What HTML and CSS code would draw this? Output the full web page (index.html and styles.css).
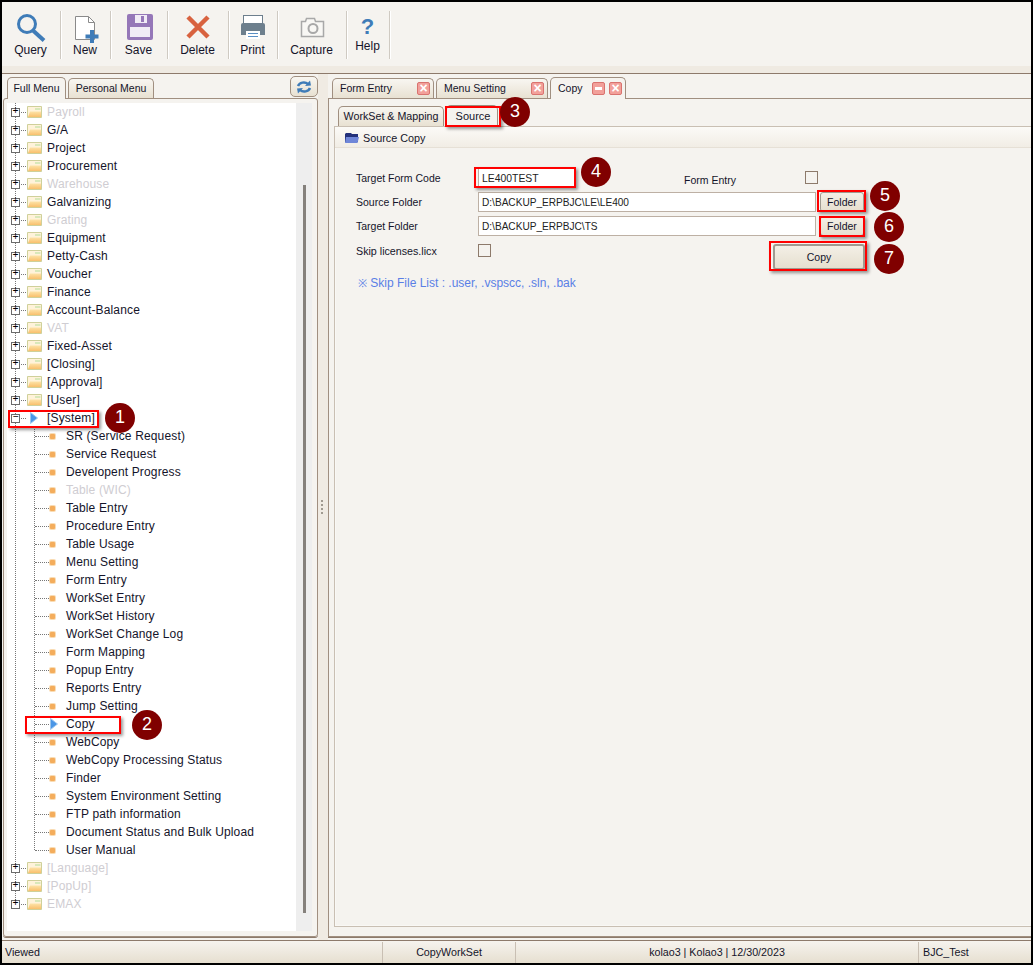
FILE: index.html
```html
<!DOCTYPE html>
<html>
<head>
    <meta charset="UTF-8">
    <title>Copy</title>
    <link rel="stylesheet" href="styles.css">
</head>
<body>

<svg class="defs" width="0" height="0">
    <defs>
        <linearGradient id="folderFill" x1="0" y1="0" x2="0" y2="1">
            <stop offset="0" stop-color="#fde3a8"/>
            <stop offset="1" stop-color="#f9bf6c"/>
        </linearGradient>
    </defs>
    <symbol id="folder" viewBox="0 0 15 12">
        <path d="M.5 .5h14v11H.5z" fill="#fff3da" stroke="#cfd09a"/>
        <path d="M8 2h5.500v2H8z" fill="#d8e8ba"/>
        <path d="M1 11l2-5.500h11V11z" fill="url(#folderFill)"/>
    </symbol>
    <symbol id="arrow" viewBox="0 0 8 12">
        <path d="M.5 .5L7.500 6 .5 11.500z" fill="#4a96e6" stroke="#9cc6ee"/>
    </symbol>
</svg>

<div id="app">
    <div class="toolbar">
        <div class="tool tool-query">
            <svg width="32" height="31" viewBox="0 0 32 31"><circle cx="12" cy="12" r="8.500" fill="none" stroke="#3f7cb8" stroke-width="3"/><path d="M18 18.500L29 28.500" stroke="#3f7cb8" stroke-width="4"/></svg>
            <span>Query</span>
        </div>
        <div class="tool tool-new">
            <svg width="32" height="31" viewBox="0 0 32 31"><path d="M6.500 4.500h13l6 6v17h-19z" fill="#fff" stroke="#8a8a8a"/><path d="M19.500 4.500v6h6" fill="none" stroke="#8a8a8a"/><path d="M23 18v13M16.500 24.500h13" stroke="#3f7cb8" stroke-width="4"/></svg>
            <span>New</span>
        </div>
        <div class="tool tool-save">
            <svg width="32" height="31" viewBox="0 0 32 31"><rect x="4" y="2" width="26" height="26" rx="2" fill="#9577b8"/><rect x="12" y="3" width="12" height="8" fill="#f1ecf6"/><rect x="18" y="4" width="3" height="6" fill="#9577b8"/><rect x="7" y="15" width="20" height="10" fill="#f1ecf6"/></svg>
            <span>Save</span>
        </div>
        <div class="tool tool-delete">
            <svg width="32" height="31" viewBox="0 0 32 31"><path d="M6 5l20 20M26 5L6 25" stroke="#d8623f" stroke-width="4.500"/></svg>
            <span>Delete</span>
        </div>
        <div class="tool tool-print">
            <svg width="32" height="31" viewBox="0 0 32 31"><rect x="6.500" y="3.500" width="19" height="9" fill="#fff" stroke="#6d7f8d"/><path d="M4 13a2 2 0 0 1 2-2h20a2 2 0 0 1 2 2v10H4z" fill="#6d7f8d"/><rect x="9" y="19" width="14" height="8" fill="#fff"/><path d="M11 21.500h10M11 24.500h10" stroke="#5a8fc4"/></svg>
            <span>Print</span>
        </div>
        <div class="tool tool-capture">
            <svg width="32" height="31" viewBox="0 0 32 31"><path d="M5.500 9.500h4l1-3h8l1 3h8v15h-22z" fill="#f8f7f4" stroke="#a8a8a8" stroke-width="1.500"/><circle cx="17" cy="16.500" r="4.500" fill="none" stroke="#a8a8a8" stroke-width="2"/></svg>
            <span>Capture</span>
        </div>
        <div class="tool tool-help">
            <span class="help-mark">?</span>
            <span>Help</span>
        </div>
    </div>
    <div class="toolbar-band"></div>

    <div class="main">
        <div class="left">
            <div class="left-tabs">
                <div class="tab tab-on tab-full">Full Menu</div>
                <div class="tab tab-personal">Personal Menu</div>
                <div class="refresh">
                    <svg width="18" height="14" viewBox="0 0 18 14"><path d="M3 6a6 5 0 0 1 10-2" fill="none" stroke="#3f7cb8" stroke-width="2.500"/><path d="M10 6l6-.5-1-5z" fill="#3f7cb8"/><path d="M15 8a6 5 0 0 1-10 2" fill="none" stroke="#3f7cb8" stroke-width="2.500"/><path d="M8 8l-6 .5 1 5z" fill="#3f7cb8"/></svg>
                </div>
            </div>
            <div class="menu-pane">
                <div class="tree-wrap">
                    <div class="tree">
                        <div class="row off"><i class="box">+</i><i class="stub"></i><svg class="folder"><use href="#folder"/></svg>Payroll</div>
                        <div class="row"><i class="box">+</i><i class="stub"></i><svg class="folder"><use href="#folder"/></svg>G/A</div>
                        <div class="row"><i class="box">+</i><i class="stub"></i><svg class="folder"><use href="#folder"/></svg>Project</div>
                        <div class="row"><i class="box">+</i><i class="stub"></i><svg class="folder"><use href="#folder"/></svg>Procurement</div>
                        <div class="row off"><i class="box">+</i><i class="stub"></i><svg class="folder"><use href="#folder"/></svg>Warehouse</div>
                        <div class="row"><i class="box">+</i><i class="stub"></i><svg class="folder"><use href="#folder"/></svg>Galvanizing</div>
                        <div class="row off"><i class="box">+</i><i class="stub"></i><svg class="folder"><use href="#folder"/></svg>Grating</div>
                        <div class="row"><i class="box">+</i><i class="stub"></i><svg class="folder"><use href="#folder"/></svg>Equipment</div>
                        <div class="row"><i class="box">+</i><i class="stub"></i><svg class="folder"><use href="#folder"/></svg>Petty-Cash</div>
                        <div class="row"><i class="box">+</i><i class="stub"></i><svg class="folder"><use href="#folder"/></svg>Voucher</div>
                        <div class="row"><i class="box">+</i><i class="stub"></i><svg class="folder"><use href="#folder"/></svg>Finance</div>
                        <div class="row"><i class="box">+</i><i class="stub"></i><svg class="folder"><use href="#folder"/></svg>Account-Balance</div>
                        <div class="row off"><i class="box">+</i><i class="stub"></i><svg class="folder"><use href="#folder"/></svg>VAT</div>
                        <div class="row"><i class="box">+</i><i class="stub"></i><svg class="folder"><use href="#folder"/></svg>Fixed-Asset</div>
                        <div class="row"><i class="box">+</i><i class="stub"></i><svg class="folder"><use href="#folder"/></svg>[Closing]</div>
                        <div class="row"><i class="box">+</i><i class="stub"></i><svg class="folder"><use href="#folder"/></svg>[Approval]</div>
                        <div class="row"><i class="box">+</i><i class="stub"></i><svg class="folder"><use href="#folder"/></svg>[User]</div>
                        <div class="row"><i class="box">&minus;</i><i class="stub"></i><svg class="open-arrow"><use href="#arrow"/></svg>[System]</div>
                        <div class="branch">
                            <div class="leaf"><i class="stub-long"></i><i class="dot"></i>SR (Service Request)</div>
                            <div class="leaf"><i class="stub-long"></i><i class="dot"></i>Service Request</div>
                            <div class="leaf"><i class="stub-long"></i><i class="dot"></i>Developent Progress</div>
                            <div class="leaf off"><i class="stub-long"></i><i class="dot"></i>Table (WIC)</div>
                            <div class="leaf"><i class="stub-long"></i><i class="dot"></i>Table Entry</div>
                            <div class="leaf"><i class="stub-long"></i><i class="dot"></i>Procedure Entry</div>
                            <div class="leaf"><i class="stub-long"></i><i class="dot"></i>Table Usage</div>
                            <div class="leaf"><i class="stub-long"></i><i class="dot"></i>Menu Setting</div>
                            <div class="leaf"><i class="stub-long"></i><i class="dot"></i>Form Entry</div>
                            <div class="leaf"><i class="stub-long"></i><i class="dot"></i>WorkSet Entry</div>
                            <div class="leaf"><i class="stub-long"></i><i class="dot"></i>WorkSet History</div>
                            <div class="leaf"><i class="stub-long"></i><i class="dot"></i>WorkSet Change Log</div>
                            <div class="leaf"><i class="stub-long"></i><i class="dot"></i>Form Mapping</div>
                            <div class="leaf"><i class="stub-long"></i><i class="dot"></i>Popup Entry</div>
                            <div class="leaf"><i class="stub-long"></i><i class="dot"></i>Reports Entry</div>
                            <div class="leaf"><i class="stub-long"></i><i class="dot"></i>Jump Setting</div>
                            <div class="leaf"><i class="stub-long"></i><svg class="leaf-arrow"><use href="#arrow"/></svg>Copy</div>
                            <div class="leaf"><i class="stub-long"></i><i class="dot"></i>WebCopy</div>
                            <div class="leaf"><i class="stub-long"></i><i class="dot"></i>WebCopy Processing Status</div>
                            <div class="leaf"><i class="stub-long"></i><i class="dot"></i>Finder</div>
                            <div class="leaf"><i class="stub-long"></i><i class="dot"></i>System Environment Setting</div>
                            <div class="leaf"><i class="stub-long"></i><i class="dot"></i>FTP path information</div>
                            <div class="leaf"><i class="stub-long"></i><i class="dot"></i>Document Status and Bulk Upload</div>
                            <div class="leaf"><i class="stub-long"></i><i class="dot"></i>User Manual</div>
                        </div>
                        <div class="row off"><i class="box">+</i><i class="stub"></i><svg class="folder"><use href="#folder"/></svg>[Language]</div>
                        <div class="row off"><i class="box">+</i><i class="stub"></i><svg class="folder"><use href="#folder"/></svg>[PopUp]</div>
                        <div class="row off"><i class="box">+</i><i class="stub"></i><svg class="folder"><use href="#folder"/></svg>EMAX</div>
                    </div>
                </div>
                <div class="scrollbar"><div class="thumb"></div></div>
            </div>
        </div>

        <div class="splitter"><i></i></div>

        <div class="right">
            <div class="page-tabs">
                <div class="tab page-tab tab-form">Form Entry<b class="close"></b></div>
                <div class="tab page-tab tab-setting">Menu Setting<b class="close"></b></div>
                <div class="tab tab-on page-tab tab-copy">Copy<b class="pin"></b><b class="close"></b></div>
            </div>
            <div class="page">
                <div class="sub-tabs">
                    <div class="tab sub-tab tab-workset">WorkSet &amp; Mapping</div>
                    <div class="tab tab-on sub-tab tab-source">Source</div>
                </div>
                <div class="panel">
                    <div class="panel-head">
                        <svg width="16" height="12" viewBox="0 0 16 12"><path d="M1 2l1-1h5l1 1h6v8H1z" fill="#23307a"/><path d="M2 5h13l-1.500 6H1z" fill="#6f86d8"/></svg>
                        <span>Source Copy</span>
                    </div>
                    <div class="form">
                        <div class="form-row">
                            <label class="field-label">Target Form Code</label>
                            <input class="input input-code" type="text" value="LE400TEST">
                            <label class="entry-label">Form Entry</label>
                            <input class="check check-entry" type="checkbox">
                        </div>
                        <div class="form-row">
                            <label class="field-label">Source Folder</label>
                            <input class="input input-path" type="text" value="D:\BACKUP_ERPBJC\LE\LE400">
                            <button class="btn btn-folder">Folder</button>
                        </div>
                        <div class="form-row">
                            <label class="field-label">Target Folder</label>
                            <input class="input input-path" type="text" value="D:\BACKUP_ERPBJC\TS">
                            <button class="btn btn-folder">Folder</button>
                        </div>
                        <div class="form-row row-skip">
                            <label class="field-label">Skip licenses.licx</label>
                            <input class="check" type="checkbox">
                            <button class="btn btn-copy">Copy</button>
                        </div>
                        <p class="note"><small>※</small> Skip File List : .user, .vspscc, .sln, .bak</p>
                    </div>
                </div>
            </div>
        </div>
    </div>

    <div class="status">
        <div class="cell cell-view">Viewed</div>
        <div class="cell cell-form">CopyWorkSet</div>
        <div class="cell cell-user">kolao3 | Kolao3 | 12/30/2023</div>
        <div class="cell cell-db">BJC_Test</div>
    </div>

    <!-- numbered callouts drawn on top of the screenshot -->
    <div class="mark mark-1"></div><div class="badge badge-1">1</div>
    <div class="mark mark-2"></div><div class="badge badge-2">2</div>
    <div class="mark mark-3"></div><div class="badge badge-3">3</div>
    <div class="mark mark-4"></div><div class="badge badge-4">4</div>
    <div class="mark mark-5"></div><div class="badge badge-5">5</div>
    <div class="mark mark-6"></div><div class="badge badge-6">6</div>
    <div class="mark mark-7"></div><div class="badge badge-7">7</div>
</div>

</body>
</html>
```

FILE: styles.css
```css
html, body {
    margin: 0;
    padding: 0;
    background: #000;
}

.defs {
    display: block;
    height: 0;
}

#app {
    position: relative;
    box-sizing: border-box;
    width: 1029px;
    height: 961px;
    margin: 2px 0 0 2px;
    overflow: hidden;
    display: flex;
    flex-direction: column;
    background: #f5f3ef;
    font-family: "Liberation Sans", Arial, sans-serif;
    font-size: 12px;
    color: #14142a;
}

/* toolbar */
.toolbar {
    display: flex;
    height: 64px;
    padding-top: 9px;
    box-sizing: border-box;
}

.tool {
    display: flex;
    flex-direction: column;
    align-items: center;
    height: 48px;
    box-sizing: border-box;
    padding: 1px 1px 0 0;
    border-right: 1px solid #cfcac2;
    box-shadow: 1px 0 0 #fff;
    line-height: 14px;
}

.tool svg {
    flex: none;
}

.tool-query { width: 59px; }
.tool-new { width: 50px; }
.tool-save { width: 57px; }
.tool-delete { width: 61px; }
.tool-print { width: 49px; }
.tool-capture { width: 69px; }
.tool-help { width: 43px; }

.help-mark {
    height: 24px;
    margin-top: 3px;
    font-size: 22px;
    line-height: 24px;
    font-weight: bold;
    color: #3f7cb8;
}

.toolbar-band {
    height: 7px;
    background: #efeae2;
    border-bottom: 1px solid #8d7a6b;
}

/* main area */
.main {
    flex: 1;
    display: flex;
    min-height: 0;
}

.left {
    width: 315px;
    margin-left: 1px;
    flex: none;
    display: flex;
    flex-direction: column;
}

.left-tabs {
    display: flex;
    height: 24px;
    padding-left: 4px;
    align-items: flex-end;
}

.tab {
    box-sizing: border-box;
    height: 20px;
    line-height: 19px;
    border: 1px solid #a08f80;
    border-bottom: 0;
    border-radius: 5px 5px 0 0;
    background: linear-gradient(#f8f6f1, #e8e1d2);
    font-size: 10.5px;
    white-space: nowrap;
}

.tab-on {
    height: 22px;
    line-height: 21px;
    background: #f5f3ef;
    margin-bottom: -1px;
    position: relative;
}

.tab-full {
    width: 59px;
    text-align: center;
}

.tab-personal {
    width: 86px;
    margin-left: 2px;
    text-align: center;
}

.refresh {
    width: 28px;
    height: 21px;
    box-sizing: border-box;
    margin: 0 0 1px auto;
    display: flex;
    align-items: center;
    justify-content: center;
    border: 1px solid #a08f80;
    border-radius: 5px;
    background: linear-gradient(#f8f6f1, #e8e1d2);
}

.menu-pane {
    flex: 1;
    display: flex;
    margin-bottom: 3px;
    padding: 4px 4px 5px 3px;
    border: 1px solid #a08f80;
    border-radius: 3px;
    box-shadow: 0 1px 0 #8d7a6b;
    min-height: 0;
}

.tree-wrap {
    width: 289px;
    background: #fff;
    overflow: hidden;
}

.tree {
    height: 801px;
    margin-left: 8px;
    border-left: 1px dotted #777;
}

.row, .leaf {
    display: flex;
    align-items: center;
    height: 18px;
    white-space: nowrap;
    letter-spacing: .15px;
}

.off {
    color: #cfcdd2;
}

.box {
    flex: none;
    box-sizing: border-box;
    width: 9px;
    height: 9px;
    margin-left: -5px;
    border: 1px solid #6b6b6b;
    background: #fff;
    color: #000;
    font: normal 10px/6px "Liberation Mono", monospace;
    text-align: center;
    letter-spacing: 0;
}

.stub {
    flex: none;
    width: 5px;
    margin: 0 1px;
    border-top: 1px dotted #777;
}

.folder {
    flex: none;
    width: 15px;
    height: 12px;
    margin-right: 5px;
}

.open-arrow {
    flex: none;
    width: 8px;
    height: 12px;
    margin: 0 9px 0 3px;
}

.branch {
    height: 423px;
    margin-left: 18px;
    border-left: 1px dotted #777;
    margin-bottom: 9px;
}

.stub-long {
    flex: none;
    width: 14px;
    margin-right: 1px;
    border-top: 1px dotted #777;
}

.dot {
    flex: none;
    width: 5px;
    height: 5px;
    margin-right: 11px;
    border-radius: 1px;
    background: #f4ad5c;
    box-shadow: 0 0 0 1px #f9dcb4;
}

.leaf-arrow {
    flex: none;
    width: 8px;
    height: 12px;
    margin-right: 8px;
}

.scrollbar {
    width: 16px;
    background: #eeeeee;
    padding-top: 82px;
    box-sizing: border-box;
}

.thumb {
    width: 3px;
    height: 728px;
    margin-left: 7px;
    background: #85817c;
}

.splitter {
    width: 10px;
    flex: none;
    display: flex;
    align-items: center;
    justify-content: center;
    background: #f0ebe3;
}

.splitter i {
    width: 2px;
    height: 14px;
    border-left: 2px dotted #a09a90;
}

.right {
    flex: 1;
    display: flex;
    flex-direction: column;
    min-width: 0;
}

.page-tabs {
    display: flex;
    height: 24px;
    padding-left: 4px;
    align-items: flex-end;
}

.page-tab {
    display: flex;
    align-items: center;
    padding-left: 7px;
    margin-right: 2px;
}

.tab-form { width: 102px; }
.tab-setting { width: 112px; }
.tab-copy { width: 76px; }

.close, .pin {
    flex: none;
    box-sizing: border-box;
    width: 13px;
    height: 13px;
    margin-left: auto;
    margin-right: 3px;
    border: 1px solid #d9736f;
    border-radius: 2px;
    background: #f2a09a;
    position: relative;
}

.close::before {
    content: "\00d7";
    display: block;
    font: bold 14px/10px "Liberation Sans", sans-serif;
    color: #fff;
    text-align: center;
}

.pin {
    margin-right: 4px;
}

.pin::before {
    content: "";
    display: block;
    width: 7px;
    height: 3px;
    margin: 4px 2px;
    background: #fff;
}

.pin + .close {
    margin-left: 0;
}

.page {
    flex: 1;
    display: flex;
    flex-direction: column;
    margin-bottom: 3px;
    padding: 6px 0 9px 5px;
    border: 1px solid #a08f80;
    border-right: 0;
    box-shadow: 0 1px 0 #8d7a6b;
    box-sizing: border-box;
    min-height: 0;
}

.sub-tabs {
    display: flex;
    padding-left: 4px;
    align-items: flex-end;
    height: 21px;
}

.sub-tab {
    text-align: center;
    font-size: 10.7px;
}

.tab-workset { width: 106px; }
.tab-source { width: 52px; margin-left: 2px; font-size: 11px; padding-left: 2px; }

.panel {
    flex: 1;
    border: 1px solid #c9bfb3;
    border-right: 0;
    box-shadow: 0 0 0 1px #f9f8f5 inset;
    min-height: 0;
}

.panel-head {
    display: flex;
    align-items: center;
    gap: 3px;
    height: 18px;
    padding: 2px 0 0 9px;
    border-bottom: 1px solid #e6e0d6;
    background: linear-gradient(#fbfaf7, #f1ede5);
    font-size: 10.8px;
}

.form {
    padding: 18px 0 0 21px;
    font-size: 10.5px;
}

.form-row {
    display: flex;
    align-items: center;
    height: 24px;
}

.field-label {
    flex: none;
    width: 122px;
}

.input {
    flex: none;
    box-sizing: border-box;
    height: 20px;
    padding: 0 3px;
    border: 1px solid #bdb0a4;
    background: #fff;
    font: 10.1px "Liberation Sans", Arial, sans-serif;
    color: #222;
    outline: none;
}

.input-code { width: 97px; font-size: 10.4px; }
.input-path { width: 338px; }

.entry-label {
    flex: none;
    width: 121px;
    margin-left: 109px;
    padding-top: 4px;
}

.check {
    flex: none;
    appearance: none;
    box-sizing: border-box;
    width: 13px;
    height: 13px;
    margin: 0;
    border: 1px solid #8d7a6b;
    background: #f5f3ef;
}

.check-entry {
    margin-bottom: 1px;
}

.btn {
    flex: none;
    box-sizing: border-box;
    padding: 0;
    border: 1px solid #a09a90;
    border-radius: 3px;
    background: linear-gradient(#f3efe6, #e6dfcf);
    font: 10.5px "Liberation Sans", Arial, sans-serif;
    color: #14142a;
}

.btn-folder {
    width: 44px;
    height: 20px;
    margin-left: 4px;
}

.row-skip {
    height: 28px;
    margin-top: 5px;
    align-items: flex-start;
}

.row-skip .field-label {
    line-height: 16px;
    font-size: 10.7px;
}

.row-skip .check {
    margin-top: 1px;
}

.btn-copy {
    width: 92px;
    height: 26px;
    margin: 1px 0 0 282px;
    border-width: 2px;
}

.note {
    margin: 4px 0 0 2px;
    line-height: 16px;
    font-size: 12px;
    color: #5a7fe6;
}

.note small {
    font-size: 11px;
}

/* status bar */
.status {
    display: flex;
    height: 23px;
    flex: none;
    box-sizing: border-box;
    padding-top: 1px;
    border-top: 1px solid #8d7a6b;
    background: linear-gradient(#f6f3ee, #e6dfd0);
    font-size: 10.7px;
    line-height: 20px;
}

.cell {
    box-sizing: border-box;
    white-space: nowrap;
}

.cell-view { width: 380px; padding-left: 3px; }
.cell-form { width: 133px; text-align: center; border-left: 1px solid #c9bfb3; }
.cell-user { width: 403px; text-align: center; border-left: 1px solid #c9bfb3; }
.cell-db { flex: 1; padding-left: 4px; border-left: 1px solid #c9bfb3; }

/* callouts */
.mark {
    position: absolute;
    box-sizing: border-box;
    border: 2px solid #f00;
    box-shadow: 2px 2px 3px rgba(0, 0, 0, .4);
}

.mark-1 { left: 6px; top: 408px; width: 91px; height: 18px; }
.mark-2 { left: 23px; top: 714px; width: 96px; height: 18px; }
.mark-3 { left: 443px; top: 104px; width: 56px; height: 21px; }
.mark-4 { left: 472px; top: 165px; width: 102px; height: 21px; }
.mark-5 { left: 815px; top: 188px; width: 49px; height: 22px; }
.mark-6 { left: 817px; top: 214px; width: 46px; height: 21px; }
.mark-7 { left: 767px; top: 239px; width: 98px; height: 30px; }

.badge {
    position: absolute;
    width: 30px;
    height: 30px;
    border-radius: 50%;
    background: #800000;
    color: #fff;
    font-size: 18px;
    line-height: 29px;
    text-align: center;
}

.badge-1 { left: 103px; top: 401px; }
.badge-2 { left: 130px; top: 708px; }
.badge-3 { left: 498px; top: 95px; }
.badge-4 { left: 579px; top: 155px; }
.badge-5 { left: 868px; top: 179px; }
.badge-6 { left: 872px; top: 210px; }
.badge-7 { left: 872px; top: 242px; }
```
